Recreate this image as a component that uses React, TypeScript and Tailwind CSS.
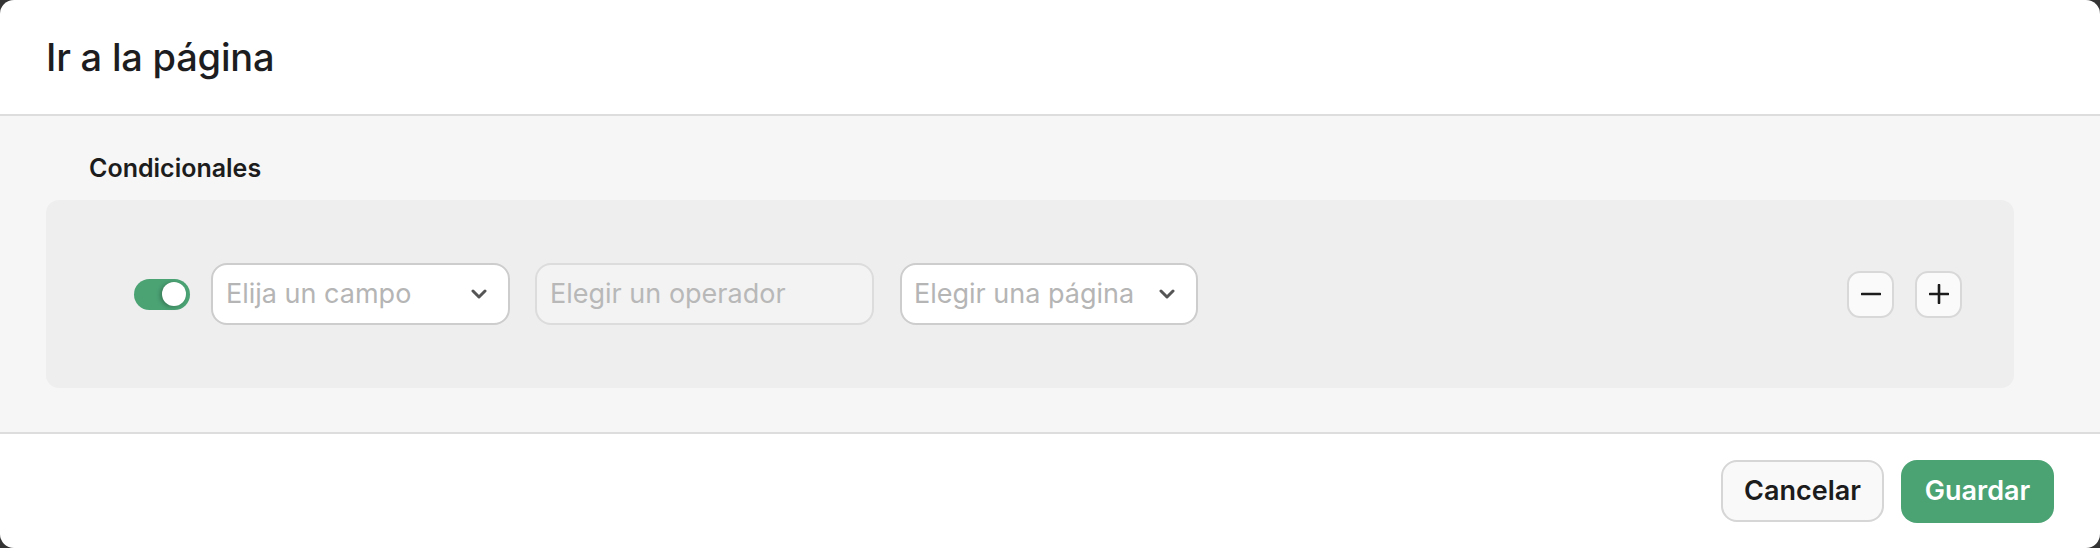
import React from "react";

function Chevron() {
  return (
    <svg width="16" height="10" viewBox="0 0 16 10" fill="none">
      <polyline points="2,2 8,8 14,2" stroke="#555555" strokeWidth="3" strokeLinecap="round" strokeLinejoin="round" />
    </svg>
  );
}

export default function App() {
  return (
    <div className="w-[2100px] h-[548px] overflow-hidden bg-[#343434]" style={{ fontFamily: "Inter, 'Noto Sans', sans-serif" }}>
      <div className="flex flex-col h-full rounded-[14px] overflow-hidden bg-white">
        <div className="h-[116px] shrink-0 flex items-center pl-[46px] border-b-2 border-[#dddddd]">
          <h1 className="text-[38px] leading-none font-[550] text-[#1d1d1f] tracking-[-0.2px]">Ir a la página</h1>
        </div>
        <div className="flex-1 bg-[#f6f6f6] pl-[46px] pr-[86px] pt-[40px] pb-[44px] flex flex-col">
          <div className="pl-[43px] text-[25px] leading-none font-semibold text-[#1c1c1c]">Condicionales</div>
          <div className="mt-[19px] h-[188px] rounded-[13px] bg-[#eeeeee] flex items-center pl-[88px] pr-[52px]">
            <div className="w-[56px] h-[31px] rounded-full bg-[#4ba374] flex items-center justify-end pr-[4px]">
              <div className="w-[24px] h-[24px] rounded-full bg-white shadow-[-2px_1px_4px_rgba(0,0,0,0.25)]" />
            </div>
            <div className="ml-[21px] w-[299px] h-[62px] rounded-[16px] border-2 border-[#cdcdcd] bg-white flex items-center justify-between pl-[13px] pr-[21px]">
              <span className="text-[27px] text-[#b5b5b5]">Elija un campo</span>
              <Chevron />
            </div>
            <div className="ml-[25px] w-[339px] h-[62px] rounded-[16px] border-2 border-[#dcdcdc] bg-[#f3f3f3] flex items-center pl-[13px]">
              <span className="text-[27px] text-[#b8b8b8]">Elegir un operador</span>
            </div>
            <div className="ml-[26px] w-[298px] h-[62px] rounded-[16px] border-2 border-[#cdcdcd] bg-white flex items-center justify-between pl-[12px] pr-[21px]">
              <span className="text-[27px] text-[#b5b5b5]">Elegir una página</span>
              <Chevron />
            </div>
            <div className="flex-1" />
            <div className="w-[47px] h-[47px] rounded-[13px] border-2 border-[#d8d8d8] bg-[#fafafa] flex items-center justify-center">
              <svg width="20" height="20" viewBox="0 0 20 20">
                <line x1="1" y1="10" x2="19" y2="10" stroke="#1c1c1c" strokeWidth="2.6" strokeLinecap="round" />
              </svg>
            </div>
            <div className="ml-[21px] w-[47px] h-[47px] rounded-[13px] border-2 border-[#d8d8d8] bg-[#fafafa] flex items-center justify-center">
              <svg width="20" height="20" viewBox="0 0 20 20">
                <line x1="1" y1="10" x2="19" y2="10" stroke="#1c1c1c" strokeWidth="2.6" strokeLinecap="round" />
                <line x1="10" y1="1" x2="10" y2="19" stroke="#1c1c1c" strokeWidth="2.6" strokeLinecap="round" />
              </svg>
            </div>
          </div>
        </div>
        <div className="h-[116px] shrink-0 border-t-2 border-[#dddddd] flex items-center justify-end pr-[46px] gap-[17px]">
          <button className="w-[163px] h-[62px] rounded-[16px] border-2 border-[#d6d6d6] bg-[#f9f9f9] text-[27px] font-semibold text-[#1c1c1c]">Cancelar</button>
          <button className="w-[153px] h-[63px] rounded-[16px] bg-[#4ba374] text-[27px] font-semibold text-white">Guardar</button>
        </div>
      </div>
    </div>
  );
}
